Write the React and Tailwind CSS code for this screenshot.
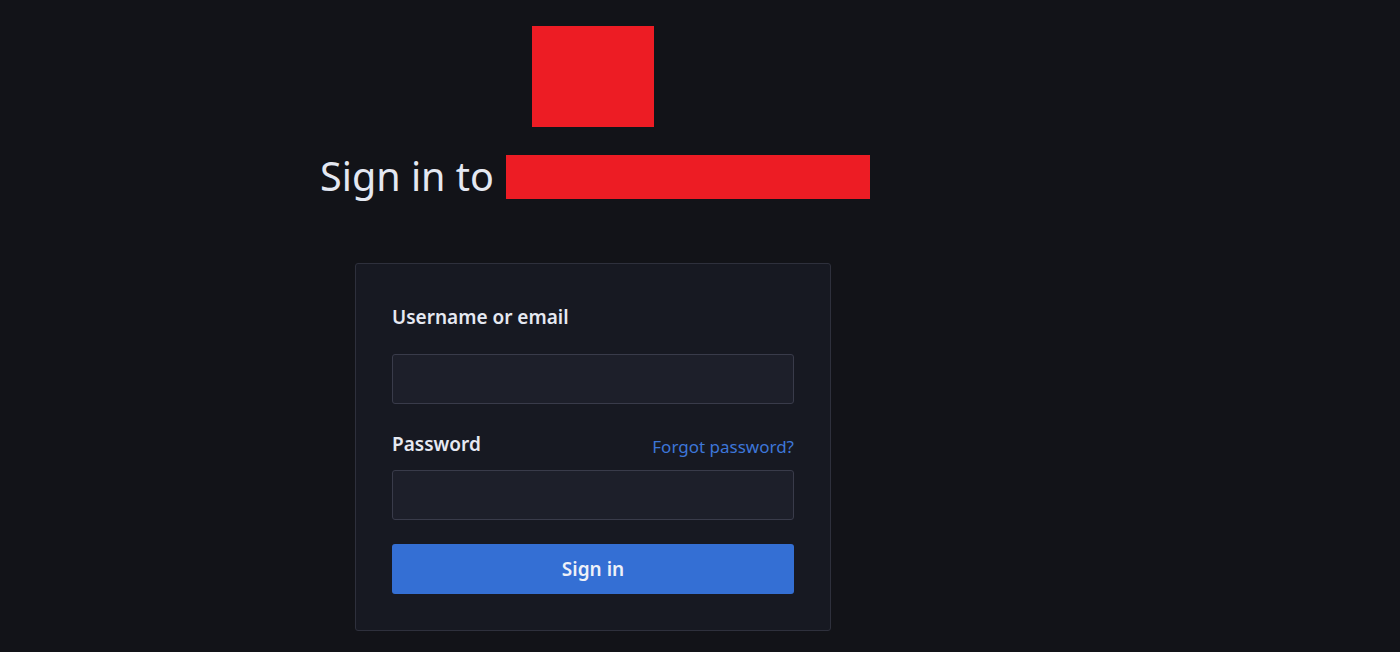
export default function App() {
  return (
    <div
      className="min-h-screen w-full bg-[#121318] text-[#d8dce8]"
      style={{ fontFamily: '"Noto Sans", "Open Sans", sans-serif' }}
    >
      <div className="w-[1186px] flex flex-col items-center pt-[26px]">
        {/* logo placeholder */}
        <div className="w-[122px] h-[101px] bg-[#ed1c24]" />

        {/* title */}
        <div className="mt-[28px] ml-[4px] flex items-center h-[44px]">
          <h1 className="text-[39.5px] leading-none text-[#e4e8f2] mr-[12px]">Sign in to</h1>
          <div className="w-[364px] h-[44px] bg-[#ed1c24]" />
        </div>

        {/* login card */}
        <div className="mt-[64px] w-[476px] border border-[#2e303c] rounded-[3px] bg-[#171922] px-[36px] pt-[40px] pb-[36px]">
          <form className="flex flex-col">
            <label className="text-[19px] font-semibold text-[#e6e9f2] leading-[26px]">Username or email</label>
            <input
              type="text"
              className="mt-[24px] h-[50px] w-full rounded-[3px] border border-[#393b4a] bg-[#1d1f2a] px-3 text-[#e6e9f2] outline-none"
            />

            <div className="mt-[27px] flex items-end justify-between">
              <label className="text-[19px] font-semibold text-[#e6e9f2] leading-[26px]">Password</label>
              <a href="#" className="text-[17px] text-[#3d76d9] leading-[24px] translate-y-[2px]">Forgot password?</a>
            </div>
            <input
              type="password"
              className="mt-[13px] h-[50px] w-full rounded-[3px] border border-[#393b4a] bg-[#1d1f2a] px-3 text-[#e6e9f2] outline-none"
            />

            <button
              type="button"
              className="mt-[24px] h-[50px] w-full rounded-[3px] bg-[#346fd4] text-[19px] font-semibold text-[#eef1f8]"
            >
              Sign in
            </button>
          </form>
        </div>
      </div>
    </div>
  );
}
